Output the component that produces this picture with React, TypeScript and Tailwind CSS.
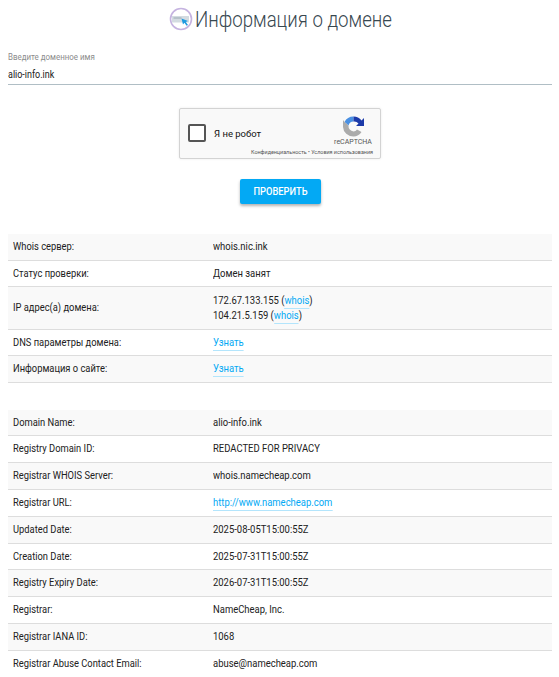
import React from "react";

const Link = ({ children }: { children: React.ReactNode }) => (
  <a className="text-[#03a9f4] border-b border-[#b3e5fc] pb-px">{children}</a>
);

const N = ({ children }: { children: React.ReactNode }) => (
  <span className="inline-block origin-left scale-x-[0.89] whitespace-nowrap">{children}</span>
);

const V = ({ children }: { children: React.ReactNode }) => (
  <span className="inline-block origin-left scale-x-[0.9] whitespace-nowrap">{children}</span>
);

const rows1: [string, React.ReactNode, string][] = [
  ["Whois сервер:", <V>whois.nic.ink</V>, "h-[27px]"],
  ["Статус проверки:", <V>Домен занят</V>, "h-[26px]"],
  [
    "IP адрес(а) домена:",
    <div className="leading-[15px]">
      <div><V>172.67.133.155 (<Link>whois</Link>)</V></div>
      <div><V>104.21.5.159 (<Link>whois</Link>)</V></div>
    </div>,
    "h-[43px]",
  ],
  ["DNS параметры домена:", <V><Link>Узнать</Link></V>, "h-[26px]"],
  ["Информация о сайте:", <V><Link>Узнать</Link></V>, "h-[27px]"],
];

const rows2: [string, React.ReactNode][] = [
  ["Domain Name:", <V>alio-info.ink</V>],
  ["Registry Domain ID:", <V>REDACTED FOR PRIVACY</V>],
  ["Registrar WHOIS Server:", <V>whois.namecheap.com</V>],
  ["Registrar URL:", <V><Link>http://www.namecheap.com</Link></V>],
  ["Updated Date:", <V>2025-08-05T15:00:55Z</V>],
  ["Creation Date:", <V>2025-07-31T15:00:55Z</V>],
  ["Registry Expiry Date:", <V>2026-07-31T15:00:55Z</V>],
  ["Registrar:", <V>NameCheap, Inc.</V>],
  ["Registrar IANA ID:", <V>1068</V>],
  ["Registrar Abuse Contact Email:", <V>abuse@namecheap.com</V>],
];

const Row = ({ label, value, h, odd }: { label: string; value: React.ReactNode; h: string; odd: boolean }) => (
  <div className={`flex items-center border-b border-[#ddd] ${h} ${odd ? "bg-[#f9f9f9]" : "bg-white"}`}>
    <div className="w-[205px] pl-[5px] shrink-0"><N>{label}</N></div>
    <div className="flex-1">{value}</div>
  </div>
);

export default function App() {
  return (
    <div className="w-[559px] h-[677px] overflow-hidden bg-white text-[#212121] font-['Roboto',sans-serif] text-[10.5px]">
      <div className="flex items-center h-[38px] pl-[158px] pt-[2px]">
        <svg width="24" height="24" viewBox="0 0 24 24" className="mr-[2px] mt-[-2px] ml-[11px] shrink-0">
          <circle cx="12" cy="12" r="10.5" fill="#fff" stroke="#c5b3e0" strokeWidth="1.6" />
          <rect x="3" y="9" width="17" height="6.5" fill="#d3dbe1" />
          <rect x="4.5" y="10.5" width="8" height="1" fill="#9aa7b2" />
          <path d="M12.5 11.5 L19 14 L16.8 15 L19 18 L17.6 18.8 L15.4 15.8 L14 17.6 Z" fill="#1e9be0" />
        </svg>
        <h1 className="text-[22px] font-light text-[#37474f] leading-none whitespace-nowrap origin-left scale-x-[0.847]">Информация о домене</h1>
      </div>

      <div className="mx-[8px] mt-[13px] w-[544px]">
        <div className="text-[9.5px] text-[#8c8c8c] leading-[12px] origin-left scale-x-[0.835] whitespace-nowrap">Введите доменное имя</div>
        <div className="h-[22px] pt-[2px] flex items-center border-b border-[#b0bec5] text-[#212121]">
          <span className="inline-block origin-left scale-x-[0.855]">alio-info.ink</span>
        </div>
      </div>

      <div className="mt-[23px] w-[202px] h-[51px] ml-[179px] bg-[#f9f9f9] border border-[#d3d3d3] rounded-[2px] shadow-[0_0_3px_rgba(0,0,0,0.08)] flex relative">
        <div className="w-[18px] h-[18px] ml-[8px] mt-[15px] bg-white border-2 border-[#555] rounded-[2px]" />
        <div className="ml-[8px] mt-[19px] text-[9.5px] leading-[12px] text-[#111]">Я не робот</div>
        <div className="absolute right-[7px] top-[7px] flex flex-col items-center w-[40px]">
          <svg width="21" height="21" viewBox="0 0 21 21">
            <path d="M10.5 0.5 A10 10 0 0 0 1.5 6 L5.5 9.5 A5.5 5.5 0 0 1 10.5 5.5 Z" fill="#4a90e2" />
            <path d="M10.5 0.5 A10 10 0 0 1 18.5 4.5 L21 2 L21 10 L13 10 L15.5 7.5 A5.5 5.5 0 0 0 10.5 5.5 Z" fill="#1c3aa9" />
            <path d="M1.5 6 L0 4 L0 11 A10.5 10 0 0 0 10.5 20.5 A10 10 0 0 0 18.5 16 L14 13.5 A5 5 0 0 1 10.5 15.5 A5.5 5.5 0 0 1 5.5 9.5 Z" fill="#ababab" />
          </svg>
          <div className="text-[7px] leading-[9px] text-[#555] mt-[1px] whitespace-nowrap">reCAPTCHA</div>
        </div>
        <div className="absolute right-[7px] bottom-[3px] text-[5.4px] leading-[6px] text-[#555] whitespace-nowrap">Конфиденциальность • Условия использования</div>
      </div>

      <div className="ml-[240px] mt-[20px]">
        <button className="w-[81px] h-[25px] bg-[#03a9f4] text-white text-[10.5px] font-medium rounded-[2px] shadow-[0_2px_3px_rgba(0,0,0,0.3)]">
          <span className="inline-block scale-x-[0.885]">ПРОВЕРИТЬ</span>
        </button>
      </div>

      <div className="ml-[8px] w-[544px] mt-[30px]">
        {rows1.map(([l, v, h], i) => (
          <Row key={l} label={l} value={v} h={h} odd={i % 2 === 0} />
        ))}
      </div>

      <div className="ml-[8px] w-[544px] mt-[26.6px]">
        {rows2.map(([l, v], i) => (
          <Row key={l} label={l} value={v} h="h-[26.8px]" odd={i % 2 === 0} />
        ))}
      </div>
    </div>
  );
}
